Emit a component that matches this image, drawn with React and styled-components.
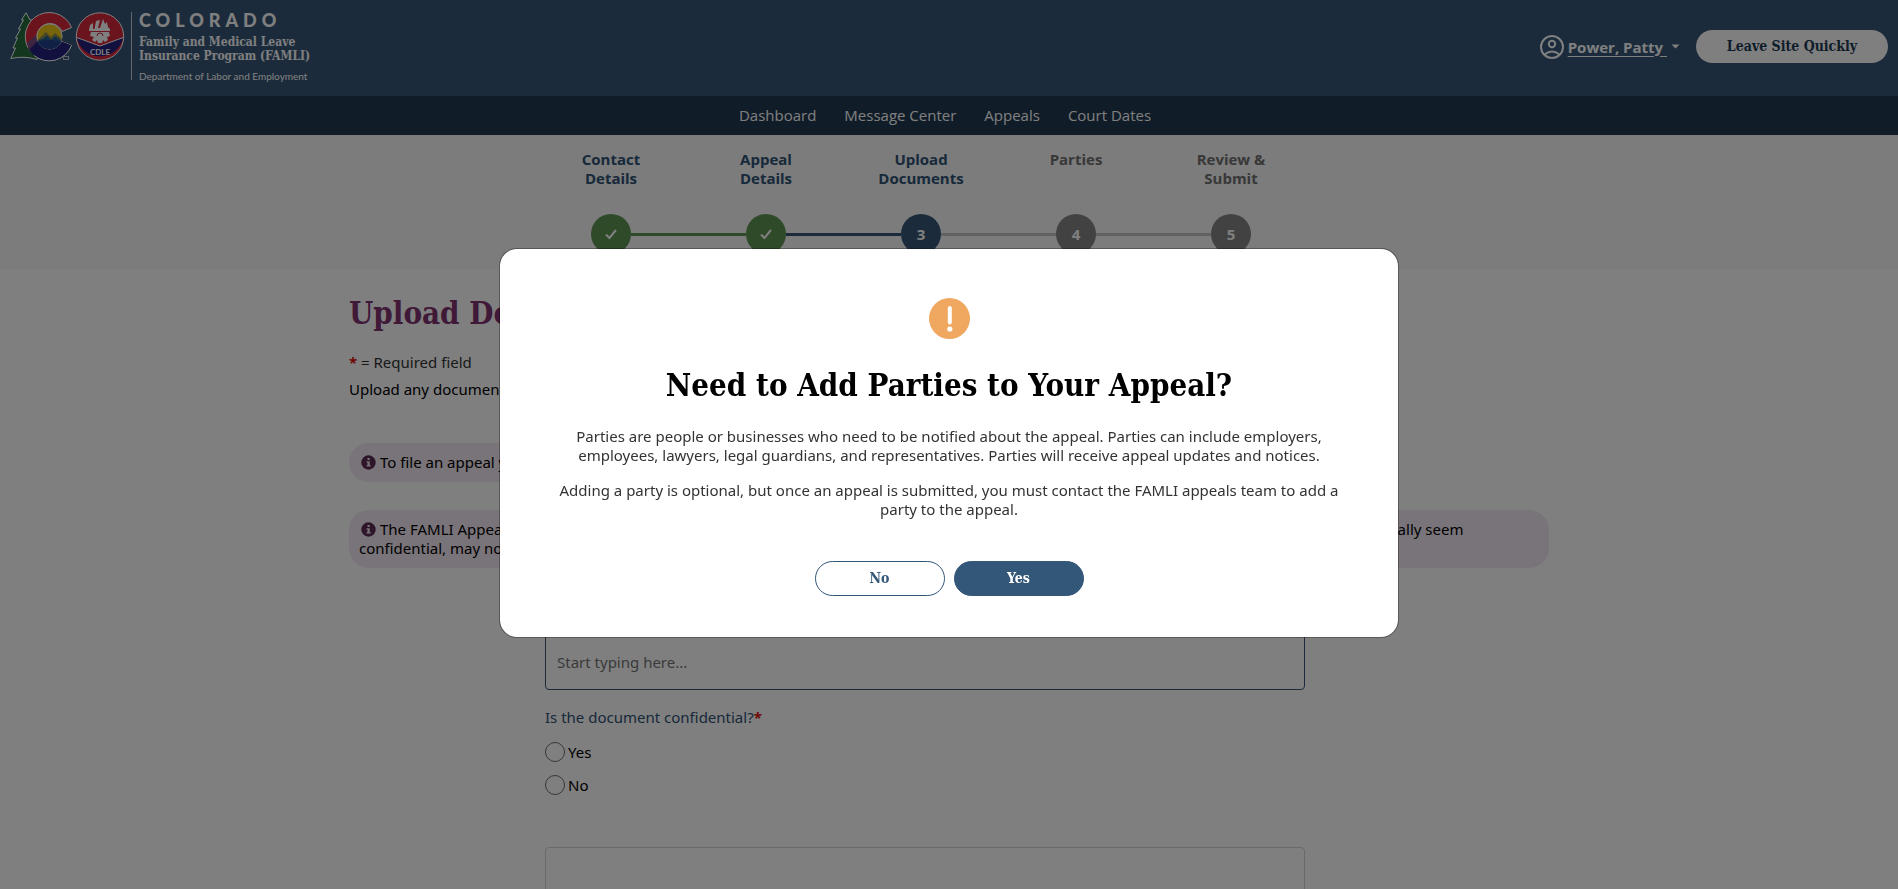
import styled, { createGlobalStyle } from "styled-components";

const slab = `"DejaVu Serif Condensed", "DejaVu Serif", serif`;
const sans = `"Noto Sans", sans-serif`;
const menuSans = `"Open Sans", sans-serif`;

const GlobalStyle = createGlobalStyle`
  * {
    box-sizing: border-box;
  }
  body {
    margin: 0;
    height: 100vh;
    overflow: hidden;
    background-color: white;
    color: black;
    font-family: ${sans};
    font-size: 15px;
    line-height: 19px;
  }
  h1, h2, p, fieldset, legend {
    margin: 0;
    padding: 0;
    border: none;
  }
`;

const Header = styled.header`
  display: flex;
  align-items: flex-start;
  justify-content: space-between;
  height: 96px;
  padding: 0 10px;
  background-color: #365778;
  color: white;
`;

const Brand = styled.a`
  display: flex;
  padding-top: 12px;
  color: white;
  text-decoration: none;
`;

const BrandText = styled.div`
  display: flex;
  flex-direction: column;
  height: 68px;
  margin-left: 6px;
  padding-left: 7px;
  border-left: 1px solid rgba(255, 255, 255, 0.7);
`;

const State = styled.span`
  font-family: Lato, sans-serif;
  font-size: 18px;
  font-weight: 900;
  line-height: 16px;
  letter-spacing: 5px;
`;

const Program = styled.span`
  margin-top: 7px;
  font-family: ${slab};
  font-size: 12px;
  font-weight: bold;
  line-height: 14px;
`;

const Department = styled.span`
  margin-top: 6px;
  font-family: Lato, sans-serif;
  font-size: 10px;
  line-height: 14px;
`;

const HeaderRight = styled.div`
  display: flex;
  align-items: center;
  padding-top: 30px;
`;

const UserMenu = styled.button`
  display: flex;
  align-items: center;
  gap: 4px;
  margin-right: 16px;
  padding: 0;
  border: none;
  background: none;
  color: white;
  font-family: ${menuSans};
  font-size: 15px;
  font-weight: bold;
  cursor: pointer;
`;

const UserName = styled.span`
  text-decoration: underline;
  text-underline-offset: 3px;
  white-space: pre;
`;

const LeaveButton = styled.button`
  width: 192px;
  height: 33px;
  padding: 0 0 2px;
  border: none;
  border-radius: 17px;
  background-color: white;
  color: #1f3a54;
  font-family: ${slab};
  font-size: 14px;
  font-weight: bold;
  cursor: pointer;
`;

const Nav = styled.nav`
  display: flex;
  justify-content: center;
  gap: 28px;
  padding: 10px 8px 10px 0;
  background-color: #203850;
  font-family: ${menuSans};
`;

const NavLink = styled.a`
  color: white;
  text-decoration: none;
`;

const StepBar = styled.div`
  display: flex;
  justify-content: center;
  height: 134px;
  padding: 15px 56px 0 0;
  background-color: #f8f8f8;
`;

const Steps = styled.ol`
  display: flex;
  margin: 0;
  padding: 0;
  list-style: none;
`;

const Step = styled.li`
  display: flex;
  flex-direction: column;
  align-items: center;
  width: 155px;
  color: ${(props) => (props.$todo ? "#707070" : "#2f5274")};
  font-family: ${menuSans};
  font-weight: bold;
  text-align: center;
`;

const StepLabel = styled.span`
  width: 90px;
  height: 64px;
`;

const StepTrack = styled.div`
  display: grid;
  grid-template-columns: 1fr 40px 1fr;
  align-items: center;
  width: 100%;
`;

const StepLine = styled.div`
  height: 3px;
  background-color: ${(props) => props.$color || "transparent"};
`;

const StepCircle = styled.span`
  display: flex;
  align-items: center;
  justify-content: center;
  height: 40px;
  border-radius: 50%;
  background-color: ${(props) => props.$color};
  color: white;
`;

const Main = styled.main`
  max-width: 1200px;
  margin: 0 auto;
  padding-top: 24px;
`;

const Title = styled.h1`
  color: #803070;
  font-family: ${slab};
  font-size: 31px;
  line-height: 40px;
`;

const Required = styled.p`
  margin-top: 20px;
  color: #333;
`;

const Star = styled.span`
  color: #e01010;
  font-weight: bold;
`;

const Intro = styled.p`
  margin-top: 8px;
`;

const Notice = styled.div`
  width: fit-content;
  margin-top: ${(props) => props.$gap};
  padding: 10px;
  border-radius: 20px;
  background-color: #f2e8f2;

  svg {
    margin: 0 4px 0 2px;
    vertical-align: -2px;
  }
`;

const Form = styled.form`
  display: flex;
  flex-direction: column;
  max-width: 956px;
  padding: 40px 0 0 196px;
`;

const FieldLabel = styled.label`
  color: #2f5274;
`;

const Input = styled.input`
  width: 100%;
  height: 56px;
  margin-top: 7px;
  padding: 0 11px;
  border: 1px solid #365778;
  border-radius: 4px;
  font-family: ${sans};
  font-size: 15px;

  &::placeholder {
    color: #757575;
  }
`;

const RadioGroup = styled.fieldset`
  margin-top: 18px;

  legend {
    margin-bottom: 2px;
    color: #2f5274;
  }
`;

const RadioRow = styled.div`
  display: flex;
  align-items: center;
  gap: 3px;
  margin-top: 13px;
`;

const Radio = styled.input`
  appearance: none;
  width: 20px;
  height: 20px;
  margin: 0;
  border: 1px solid #707070;
  border-radius: 50%;

  &:checked {
    background-color: #365778;
  }
`;

const DropArea = styled.div`
  height: 160px;
  margin-top: 52px;
  border: 1px solid #d4d4d4;
  border-radius: 4px;
`;

const Overlay = styled.div`
  position: fixed;
  inset: 0;
  display: flex;
  align-items: center;
  justify-content: center;
  padding-bottom: 3px;
  background-color: rgba(0, 0, 0, 0.5);
`;

const Modal = styled.div`
  display: flex;
  flex-direction: column;
  align-items: center;
  width: 900px;
  max-width: 100%;
  padding: 49px 40px 41px;
  border: 1px solid rgba(0, 0, 0, 0.3);
  border-radius: 18px;
  background-color: white;
  background-clip: padding-box;
  text-align: center;
`;

const ModalTitle = styled.h2`
  margin: 26px 0 22px;
  font-family: ${slab};
  font-size: 31px;
  line-height: 40px;
`;

const ModalText = styled.p`
  margin-bottom: 16px;
  color: #333;
`;

const ModalButtons = styled.div`
  display: flex;
  gap: 9px;
  margin-top: 26px;
`;

const ModalButton = styled.button`
  width: 130px;
  height: 35px;
  padding: 0 0 2px;
  border: 1px solid #335779;
  border-radius: 18px;
  background-color: ${(props) => (props.$primary ? "#335779" : "white")};
  color: ${(props) => (props.$primary ? "white" : "#335779")};
  font-family: ${slab};
  font-size: 14px;
  font-weight: bold;
  cursor: pointer;
`;

const LogoLabel = styled.text`
  fill: white;
  font-family: Lato, sans-serif;
  font-size: 8px;
  font-weight: bold;
`;

const Logo = () => (
  <svg width="115" height="50" viewBox="0 0 115 50" aria-hidden="true">
    <path
      d="M16 .8 L11.500 8 L13.500 8 L8.500 17 L10.500 17 L5.500 26 L7.500 26 L3 36 L5.500 36 L.8 46.500 Q14 43.500 27 47.500 L33 30 L24 8 L20 8 Z"
      fill="#246c3c" stroke="white" strokeWidth="1"
    />
    <path d="M61.500 15.500 A24 24 0 1 0 61.500 33.500 L52 29.500 A13 13 0 1 1 52 19.500 Z" fill="#d8283c" stroke="white" strokeWidth="1" />
    <path d="M18 36 L28 27 A13 13 0 0 0 52 29.500 L61.500 33.500 A24 24 0 0 1 18 36 Z" fill="#23207c" />
    <path d="M17 31 L26 23 L27.500 29 L19 38 Z" fill="#7a4a84" />
    <path d="M61.500 33.500 A24 24 0 0 1 24 43.500" fill="none" stroke="white" strokeWidth="1" />
    <circle cx="39.500" cy="24.500" r="12.600" fill="#f0c814" stroke="white" strokeWidth="1" />
    <path d="M27.500 28 L36 20 L41 25 L45 21 L52 27 A13 13 0 0 1 28 30 Z" fill="#8c8c50" />
    <path d="M27.500 29 L34 26 L37 23.500 L41 28 L45 24 L51.500 29 A13 13 0 0 1 27.500 29 Z" fill="#245c90" />
    <path d="M28 30 Q39 26 51 30 A13 13 0 0 1 28 30 Z" fill="#23408c" />
    <rect x="53.500" y="44.500" width="5" height="3" fill="none" stroke="#b8c4d0" strokeWidth="1" />
    <circle cx="90" cy="24.500" r="23.700" fill="#d8283c" />
    <path d="M66.800 25.500 L90 34 L113.200 25.500 A23.700 23.700 0 0 1 66.800 25.500 Z" fill="#23207c" />
    <path d="M66.800 25.500 L90 34 L113.200 25.500" fill="none" stroke="white" strokeWidth="1" />
    <circle cx="90" cy="24.500" r="23.700" fill="none" stroke="white" strokeWidth="1" />
    <path d="M79 18 L80 13 L83 11 L83 17 L84.500 17 L86 9 L90 8 L88 16 L90 16 L93 7 L95 12 L97 10 L98 15 L100 17 L100 19 L79 19 Z" fill="white" />
    <path d="M81 20 H99 L100 24 L97 25 L98 28 L95 30 L93 28 L92 31 L88 31 L87 28 L85 30 L82 28 L84 25 L80 24 Z" fill="white" />
    <path d="M87 24 A3 3 0 0 1 93 24" fill="none" stroke="#d8283c" strokeWidth="1" />
    <LogoLabel x="90" y="43" textAnchor="middle">CDLE</LogoLabel>
  </svg>
);

const UserIcon = () => (
  <svg width="24" height="24" viewBox="0 0 24 24" fill="none" stroke="white" strokeWidth="2" aria-hidden="true">
    <circle cx="12" cy="12" r="11" />
    <circle cx="12" cy="9" r="3.200" />
    <path d="M4.500 19.500 Q12 13.500 19.500 19.500" />
  </svg>
);

const CaretIcon = () => (
  <svg width="9" height="10" viewBox="0 0 9 10" aria-hidden="true">
    <path d="M.5 2.500 H8.500 L4.500 6.500 Z" fill="white" />
  </svg>
);

const CheckIcon = () => (
  <svg width="12" height="12" viewBox="0 0 12 12" fill="none" stroke="white" strokeWidth="2" aria-hidden="true">
    <path d="M1 6.500 L4.500 10 L11 2" />
  </svg>
);

const InfoIcon = () => (
  <svg width="15" height="15" viewBox="0 0 15 15" aria-hidden="true">
    <circle cx="7.500" cy="7.500" r="7.200" fill="#5c2a54" />
    <path d="M6.500 3 H8.700 V5 H6.500 Z M5.500 6.200 H8.700 V10.200 H9.700 V11.600 H5.500 V10.200 H6.500 V7.600 H5.500 Z" fill="#f2e8f2" />
  </svg>
);

const AlertIcon = () => (
  <svg width="41" height="41" viewBox="0 0 41 41" aria-hidden="true">
    <circle cx="20.500" cy="20.500" r="20.500" fill="#f0a75f" />
    <path d="M20.800 10 V24.500" stroke="white" strokeWidth="4" strokeLinecap="round" />
    <circle cx="20.800" cy="31" r="2.600" fill="white" />
  </svg>
);

const green = "#5c9450";
const blue = "#365778";
const grey = "#848484";
const lightGrey = "#c4c4c4";

const steps = [
  { label: "Contact Details", color: green, after: green, done: true },
  { label: "Appeal Details", color: green, before: green, after: blue, done: true },
  { label: "Upload Documents", color: blue, before: blue, after: lightGrey },
  { label: "Parties", color: grey, before: lightGrey, after: lightGrey, todo: true },
  { label: "Review & Submit", color: grey, before: lightGrey, todo: true },
];

const links = ["Dashboard", "Message Center", "Appeals", "Court Dates"];

const App = () => {
  return (
    <>
      <GlobalStyle />
      <Header>
        <Brand href="#">
          <Logo />
          <BrandText>
            <State>COLORADO</State>
            <Program>
              Family and Medical Leave<br />
              Insurance Program (FAMLI)
            </Program>
            <Department>Department of Labor and Employment</Department>
          </BrandText>
        </Brand>
        <HeaderRight>
          <UserMenu type="button">
            <UserIcon />
            <UserName>{"Power, Patty "}</UserName>
            <CaretIcon />
          </UserMenu>
          <LeaveButton type="button">Leave Site Quickly</LeaveButton>
        </HeaderRight>
      </Header>

      <Nav>
        {links.map((link) => (
          <NavLink href="#" key={link}>{link}</NavLink>
        ))}
      </Nav>

      <StepBar>
        <Steps>
          {steps.map((step, i) => (
            <Step key={step.label} $todo={step.todo}>
              <StepLabel>{step.label}</StepLabel>
              <StepTrack>
                <StepLine $color={step.before} />
                <StepCircle $color={step.color}>{step.done ? <CheckIcon /> : i + 1}</StepCircle>
                <StepLine $color={step.after} />
              </StepTrack>
            </Step>
          ))}
        </Steps>
      </StepBar>

      <Main>
        <Title>Upload Documents</Title>
        <Required><Star>*</Star> = Required field</Required>
        <Intro>Upload any documents.</Intro>
        <Notice $gap="44px">
          <InfoIcon />To file an appeal you must upload at least one document.
        </Notice>
        <Notice $gap="28px">
          <InfoIcon />The FAMLI Appeals team shares uploaded documents with all of the parties to an appeal. Some of the documents you upload, which might normally seem
          confidential, may not be treated as confidential.
        </Notice>

        <Form>
          <FieldLabel htmlFor="description">Document description</FieldLabel>
          <Input id="description" name="description" type="text" placeholder="Start typing here..." autoComplete="off" />
          <RadioGroup>
            <legend>Is the document confidential?<Star>*</Star></legend>
            <RadioRow>
              <Radio type="radio" name="confidential" id="confidential-yes" />
              <label htmlFor="confidential-yes">Yes</label>
            </RadioRow>
            <RadioRow>
              <Radio type="radio" name="confidential" id="confidential-no" />
              <label htmlFor="confidential-no">No</label>
            </RadioRow>
          </RadioGroup>
          <DropArea />
        </Form>
      </Main>

      <Overlay>
        <Modal role="dialog" aria-modal="true" aria-labelledby="modal-title">
          <AlertIcon />
          <ModalTitle id="modal-title">Need to Add Parties to Your Appeal?</ModalTitle>
          <ModalText>
            Parties are people or businesses who need to be notified about the appeal. Parties can include employers,
            employees, lawyers, legal guardians, and representatives. Parties will receive appeal updates and notices.
          </ModalText>
          <ModalText>
            Adding a party is optional, but once an appeal is submitted, you must contact the FAMLI appeals team to add a
            party to the appeal.
          </ModalText>
          <ModalButtons>
            <ModalButton type="button">No</ModalButton>
            <ModalButton type="button" $primary>Yes</ModalButton>
          </ModalButtons>
        </Modal>
      </Overlay>
    </>
  );
};

export default App;
